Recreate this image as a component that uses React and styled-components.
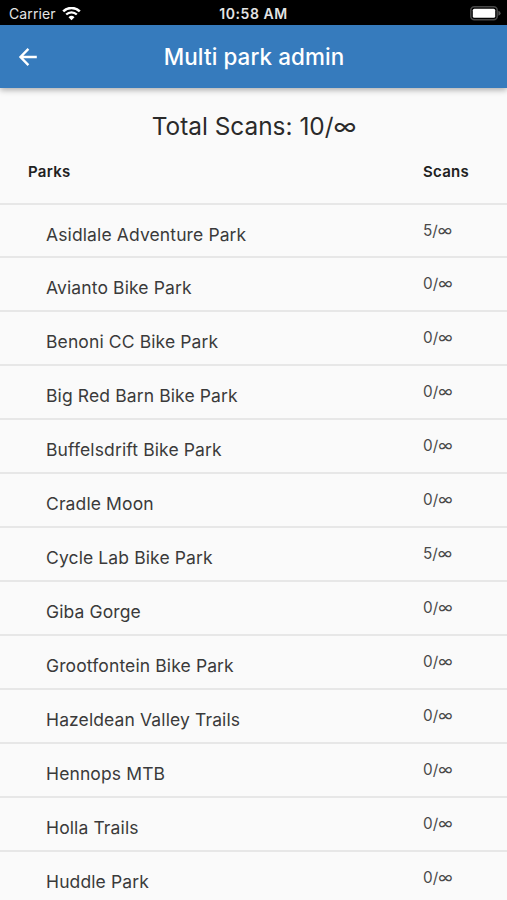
import React from 'react';
import styled, { createGlobalStyle } from 'styled-components';

const GlobalStyle = createGlobalStyle`
  * {
    box-sizing: border-box;
  }

  body {
    margin: 0;
    background-color: #fafafa;
    font-family: Inter, 'Liberation Sans', sans-serif;
    overflow: hidden;
  }
`;

const Screen = styled.div`
  width: 100%;
  height: 900px;
  overflow: hidden;
  background-color: #fafafa;
`;

const StatusBar = styled.div`
  display: grid;
  grid-template-columns: 1fr auto 1fr;
  align-items: center;
  height: 25px;
  padding: 2px 6px 0;
  background-color: #000;
  color: #e4e4e4;
  font-size: 14px;
`;

const Carrier = styled.div`
  display: flex;
  align-items: center;
  gap: 6px;
  padding-left: 3px;
  letter-spacing: 0.1px;
`;

const Clock = styled.div`
  font-size: 14px;
  font-weight: 600;
  letter-spacing: 0.55px;
`;

const BatteryIcon = styled.svg`
  justify-self: end;
`;

const AppBar = styled.header`
  display: grid;
  grid-template-columns: 56px 1fr 56px;
  align-items: center;
  height: 63px;
  background-color: #367bbd;
  color: #fff;
  box-shadow: 0 2px 6px rgba(0, 0, 0, 0.32);
`;

const BackButton = styled.button`
  display: flex;
  justify-content: center;
  padding: 0;
  border: none;
  background: none;
  color: inherit;
`;

const AppTitle = styled.h1`
  margin: 0;
  padding-left: 1px;
  text-align: center;
  font-size: 22.4px;
  font-weight: 500;
  letter-spacing: 0.1px;
`;

const Total = styled.h2`
  margin: 0;
  padding: 22px 0 0 1px;
  height: 60px;
  line-height: 32px;
  text-align: center;
  color: #2a2a2a;
  font-size: 24.4px;
  font-weight: 400;
`;

const TableHead = styled.div`
  display: flex;
  height: 56.5px;
  padding: 14px 0 0 28px;
  border-bottom: 2px solid #e7e7e7;
  color: #212121;
  font-size: 15px;
  font-weight: 600;
  line-height: 20px;
  letter-spacing: 0.28px;
`;

const Row = styled.div`
  display: flex;
  height: 53.96px;
  padding-left: 46px;
  border-bottom: 2px solid #e7e7e7;
  color: #3a3a3a;
`;

const ParkCell = styled.div`
  width: ${({ $head }) => ($head ? '395px' : '377px')};
`;

const ParkName = styled(ParkCell)`
  padding-top: 18px;
  font-size: 17.5px;
  line-height: 24px;
  letter-spacing: 0.12px;
`;

const ScanCount = styled.div`
  padding-top: 16px;
  color: #4a4a4a;
  font-size: 15.3px;
  line-height: 20px;
`;

const parks = [
  { name: 'Asidlale Adventure Park', scans: 5 },
  { name: 'Avianto Bike Park', scans: 0 },
  { name: 'Benoni CC Bike Park', scans: 0 },
  { name: 'Big Red Barn Bike Park', scans: 0 },
  { name: 'Buffelsdrift Bike Park', scans: 0 },
  { name: 'Cradle Moon', scans: 0 },
  { name: 'Cycle Lab Bike Park', scans: 5 },
  { name: 'Giba Gorge', scans: 0 },
  { name: 'Grootfontein Bike Park', scans: 0 },
  { name: 'Hazeldean Valley Trails', scans: 0 },
  { name: 'Hennops MTB', scans: 0 },
  { name: 'Holla Trails', scans: 0 },
  { name: 'Huddle Park', scans: 0 },
];

function Wifi() {
  return (
    <svg width="19" height="14" viewBox="0 0 19 14" fill="none" stroke="#fff">
      <path d="M1.2 4.4a11.8 11.8 0 0 1 16.6 0" strokeWidth="2.5" />
      <path d="M4.2 7.5a7.5 7.5 0 0 1 10.6 0" strokeWidth="2.3" />
      <path d="M9.5 13.3 6.5 10.3a4.3 4.3 0 0 1 6 0Z" fill="#fff" stroke="none" />
    </svg>
  );
}

function Battery() {
  return (
    <BatteryIcon width="31" height="15" viewBox="0 0 31 15">
      <rect x="0.8" y="0.8" width="26.4" height="12.9" rx="3.5" fill="none" stroke="#484848" strokeWidth="1.5" />
      <rect x="2.8" y="2.7" width="22.4" height="9.1" rx="1.6" fill="#fff" />
      <path d="M28.4 4.7q2.2.9 2.2 2.5t-2.2 2.5z" fill="#555" />
    </BatteryIcon>
  );
}

function App() {
  const total = parks.reduce((sum, park) => sum + park.scans, 0);

  return (
    <Screen>
      <GlobalStyle />
      <StatusBar>
        <Carrier>
          Carrier
          <Wifi />
        </Carrier>
        <Clock>10:58 AM</Clock>
        <Battery />
      </StatusBar>
      <AppBar>
        <BackButton aria-label="Back">
          <svg width="20" height="20" viewBox="0 0 20 20" fill="none" stroke="#fff" strokeWidth="2.4">
            <path d="M18.8 10H2.8M10.4 1.9 2.5 10l7.9 8.1" />
          </svg>
        </BackButton>
        <AppTitle>Multi park admin</AppTitle>
      </AppBar>
      <Total>Total Scans: {total}/∞</Total>
      <TableHead>
        <ParkCell $head>Parks</ParkCell>
        <div>Scans</div>
      </TableHead>
      {parks.map((park) => (
        <Row key={park.name}>
          <ParkName>{park.name}</ParkName>
          <ScanCount>{park.scans}/∞</ScanCount>
        </Row>
      ))}
    </Screen>
  );
}

export default App;
